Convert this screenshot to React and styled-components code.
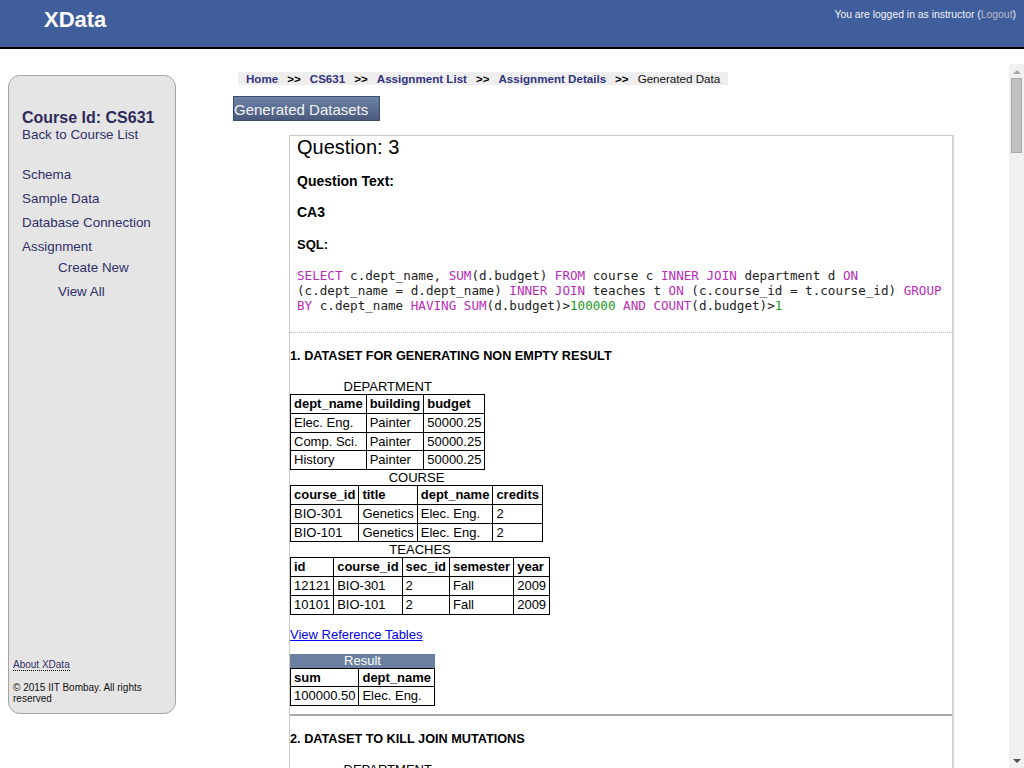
import React from "react";
import styled, { createGlobalStyle } from "styled-components";

const Global = createGlobalStyle`
  html, body { margin: 0; padding: 0; background: #fff; }
  body { font-family: "Liberation Sans", Arial, sans-serif; overflow: hidden; }
  * { box-sizing: border-box; }
`;

const Header = styled.header`
  height: 49px;
  background: #405e9b;
  border-bottom: 2px solid #000;
  display: flex;
  justify-content: space-between;
  align-items: flex-start;
`;
const Logo = styled.div`
  color: #fff;
  font-weight: bold;
  font-size: 22px;
  line-height: 26px;
  margin: 7px 0 0 44px;
`;
const UserInfo = styled.div`
  color: #f2f2f8;
  font-size: 10.4px;
  line-height: 13px;
  margin: 8px 8px 0 0;
`;
const LogoutLink = styled.a`
  color: #b8b8c8;
  text-decoration: none;
`;

const Body = styled.div`
  display: flex;
  margin-top: 15px;
  height: 704px;
`;

const Sidebar = styled.aside`
  width: 168px;
  height: 639px;
  margin: 11px 0 0 8px;
  background: #e5e5e5;
  border: 1px solid #a4a4a8;
  border-radius: 12px;
  padding: 33px 0 9px 13px;
  display: flex;
  flex-direction: column;
  flex-shrink: 0;
`;
const CourseTitle = styled.div`
  color: #2d2b5c;
  font-weight: bold;
  font-size: 16px;
  line-height: 18px;
`;
const SideLink = styled.a`
  display: block;
  color: #2f2f68;
  text-decoration: none;
  font-size: 13.4px;
  line-height: 15px;
  margin-top: ${(p) => p.$mt || 0}px;
  padding-left: ${(p) => (p.$sub ? 36 : 0)}px;
`;
const SideFooter = styled.div`
  margin-top: auto;
  margin-left: -9px;
`;
const AboutLink = styled.a`
  color: #2f2f68;
  font-size: 10px;
  line-height: 12px;
  text-decoration: none;
  border-bottom: 1px dotted #000;
`;
const Copy = styled.div`
  font-size: 10px;
  line-height: 11px;
  color: #111;
  margin-top: 10px;
  padding-right: 14px;
`;

const Main = styled.main`
  flex: 1;
  margin-left: 14px;
  height: 704px;
  overflow: hidden;
  padding-top: 8px;
`;

const ScrollTrack = styled.div`
  width: 15px;
  height: 704px;
  flex-shrink: 0;
  background: #f1f1f1;
  display: flex;
  flex-direction: column;
  align-items: center;
  padding: 6px 0 5px;
`;
const Arrow = styled.span`
  width: 0;
  height: 0;
  border-left: 4px solid transparent;
  border-right: 4px solid transparent;
  border-${(p) => (p.$down ? "top" : "bottom")}: 4px solid ${(p) => (p.$down ? "#505050" : "#a3a3a3")};
  margin-top: ${(p) => (p.$down ? "auto" : "0")};
`;
const Thumb = styled.div`
  width: 11px;
  height: 75px;
  margin-top: 4px;
  background: #c1c1c1;
  border: 1px solid #a8a8a8;
`;

const Crumbs = styled.nav`
  margin-left: 48px;
  width: 490px;
  height: 13px;
  background: #eeeeee;
  display: flex;
  align-items: center;
  gap: 8px;
  padding-left: 8px;
  font-size: 11.6px;
  line-height: 13px;
  white-space: nowrap;
`;
const Crumb = styled.a`
  color: #333380;
  font-weight: bold;
  text-decoration: none;
`;
const CrumbSep = styled.span`
  font-weight: bold;
  color: #000;
  margin: 0 1px;
`;
const CrumbCurrent = styled.span`
  color: #111;
`;

const Tab = styled.div`
  margin: 11px 0 0 43px;
  width: 147px;
  height: 25px;
  background: linear-gradient(#6d82a8, #4a5a7c);
  border: 1px solid #3e4d6c;
  color: #f4f4f4;
  font-size: 15px;
  line-height: 25px;
  white-space: nowrap;
`;

const Box = styled.section`
  margin: 14px 0 40px 99px;
  width: 664px;
  border: 1px solid #cccccc;
  box-shadow: 1px 0 1px #ddd;
`;
const QuestionPart = styled.div`
  padding: 0 7px 19px 7px;
  border-bottom: 1px dotted #bbbbbb;
`;
const QTitle = styled.div`
  font-size: 20px;
  line-height: 23px;
  color: #000;
`;
const QLabel = styled.div`
  font-weight: bold;
  font-size: ${(p) => p.$size || 14}px;
  line-height: ${(p) => (p.$size ? p.$size + 2 : 17)}px;
  margin-top: ${(p) => p.$mt}px;
`;
const Sql = styled.div`
  margin-top: 16px;
  font-family: "DejaVu Sans Mono", monospace;
  font-size: 12.6px;
  line-height: 15px;
  color: #222;
`;
const Kw = styled.span`
  color: #b82cb8;
`;
const Num = styled.span`
  color: #1a9a1a;
`;

const Dataset = styled.div`
  padding: 16px 0 8px 0;
  border-bottom: ${(p) => (p.$last ? "none" : "2px solid #a8a8a8")};
`;
const DsTitle = styled.div`
  font-weight: bold;
  font-size: 12.7px;
  line-height: 14px;
  margin-bottom: 16px;
`;
const Table = styled.table`
  border-collapse: collapse;
  font-size: 13px;
  line-height: 13.75px;
`;
const Caption = styled.caption`
  font-size: 13px;
  text-align: center;
  background: ${(p) => (p.$result ? "#6b7fa0" : "transparent")};
  color: ${(p) => (p.$result ? "#fff" : "#000")};
  line-height: ${(p) => (p.$result ? 14 : 15)}px;
`;
const Th = styled.th`
  border: 1px solid #000;
  padding: 2px 3px;
  text-align: left;
  font-weight: bold;
`;
const Td = styled.td`
  border: 1px solid #000;
  padding: 2px 3px;
`;
const RefLink = styled.a`
  display: inline-block;
  margin: 12px 0 12px 0;
  color: #0000ee;
  text-decoration: underline;
  font-size: 13px;
  line-height: 15px;
`;

const DataTable = ({ name, cols, rows, result }) => (
  <Table>
    <Caption $result={result}>{name}</Caption>
    <tbody>
      <tr>
        {cols.map((c) => (
          <Th key={c}>{c}</Th>
        ))}
      </tr>
      {rows.map((r, i) => (
        <tr key={i}>
          {r.map((v, j) => (
            <Td key={j}>{v}</Td>
          ))}
        </tr>
      ))}
    </tbody>
  </Table>
);

const baseTables = [
  {
    name: "DEPARTMENT",
    cols: ["dept_name", "building", "budget"],
    rows: [
      ["Elec. Eng.", "Painter", "50000.25"],
      ["Comp. Sci.", "Painter", "50000.25"],
      ["History", "Painter", "50000.25"],
    ],
  },
  {
    name: "COURSE",
    cols: ["course_id", "title", "dept_name", "credits"],
    rows: [
      ["BIO-301", "Genetics", "Elec. Eng.", "2"],
      ["BIO-101", "Genetics", "Elec. Eng.", "2"],
    ],
  },
  {
    name: "TEACHES",
    cols: ["id", "course_id", "sec_id", "semester", "year"],
    rows: [
      ["12121", "BIO-301", "2", "Fall", "2009"],
      ["10101", "BIO-101", "2", "Fall", "2009"],
    ],
  },
];

const titles = [
  "DATASET FOR GENERATING NON EMPTY RESULT",
  "DATASET TO KILL JOIN MUTATIONS",
  "DATASET TO KILL JOIN MUTATIONS",
];

export default function App() {
  return (
    <>
      <Global />
      <Header>
        <Logo>XData</Logo>
        <UserInfo>
          You are logged in as instructor (<LogoutLink href="#">Logout</LogoutLink>)
        </UserInfo>
      </Header>
      <Body>
        <Sidebar>
          <CourseTitle>Course Id: CS631</CourseTitle>
          <SideLink href="#">Back to Course List</SideLink>
          <SideLink href="#" $mt={25}>Schema</SideLink>
          <SideLink href="#" $mt={9}>Sample Data</SideLink>
          <SideLink href="#" $mt={9}>Database Connection</SideLink>
          <SideLink href="#" $mt={9}>Assignment</SideLink>
          <SideLink href="#" $mt={6} $sub>Create New</SideLink>
          <SideLink href="#" $mt={9} $sub>View All</SideLink>
          <SideFooter>
            <AboutLink href="#">About XData</AboutLink>
            <Copy>© 2015 IIT Bombay. All rights reserved</Copy>
          </SideFooter>
        </Sidebar>
        <Main>
          <Crumbs>
            <Crumb href="#">Home</Crumb>
            <CrumbSep>&gt;&gt;</CrumbSep>
            <Crumb href="#">CS631</Crumb>
            <CrumbSep>&gt;&gt;</CrumbSep>
            <Crumb href="#">Assignment List</Crumb>
            <CrumbSep>&gt;&gt;</CrumbSep>
            <Crumb href="#">Assignment Details</Crumb>
            <CrumbSep>&gt;&gt;</CrumbSep>
            <CrumbCurrent>Generated Data</CrumbCurrent>
          </Crumbs>
          <Tab>Generated Datasets</Tab>
          <Box>
            <QuestionPart>
              <QTitle>Question: 3</QTitle>
              <QLabel $mt={14}>Question Text:</QLabel>
              <QLabel $mt={14}>CA3</QLabel>
              <QLabel $mt={16} $size={13}>SQL:</QLabel>
              <Sql>
                <Kw>SELECT</Kw> c.dept_name, <Kw>SUM</Kw>(d.budget) <Kw>FROM</Kw> course c{" "}
                <Kw>INNER</Kw> <Kw>JOIN</Kw> department d <Kw>ON</Kw> (c.dept_name = d.dept_name){" "}
                <Kw>INNER</Kw> <Kw>JOIN</Kw> teaches t <Kw>ON</Kw> (c.course_id = t.course_id){" "}
                <Kw>GROUP</Kw> <Kw>BY</Kw> c.dept_name <Kw>HAVING</Kw> <Kw>SUM</Kw>(d.budget)&gt;
                <Num>100000</Num> <Kw>AND</Kw> <Kw>COUNT</Kw>(d.budget)&gt;<Num>1</Num>
              </Sql>
            </QuestionPart>
            {titles.map((t, i) => (
              <Dataset key={i} $last={i === titles.length - 1}>
                <DsTitle>
                  {i + 1}. {t}
                </DsTitle>
                {baseTables.map((tb) => (
                  <DataTable key={tb.name} {...tb} />
                ))}
                <RefLink href="#">View Reference Tables</RefLink>
                <DataTable
                  result
                  name="Result"
                  cols={["sum", "dept_name"]}
                  rows={[["100000.50", "Elec. Eng."]]}
                />
              </Dataset>
            ))}
          </Box>
        </Main>
        <ScrollTrack>
          <Arrow />
          <Thumb />
          <Arrow $down />
        </ScrollTrack>
      </Body>
    </>
  );
}
